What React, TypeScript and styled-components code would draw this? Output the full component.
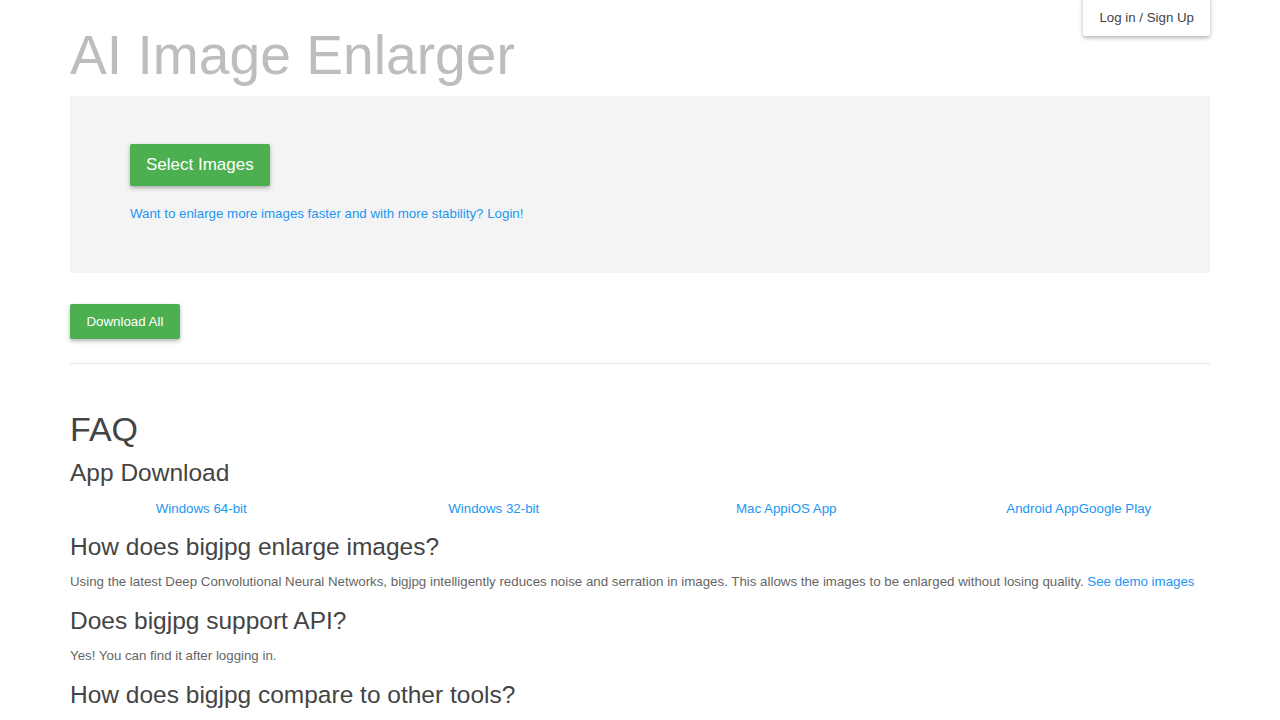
import React from "react";
import styled, { createGlobalStyle } from "styled-components";

const Global = createGlobalStyle`
  html, body { margin: 0; padding: 0; background: #fff; }
  body { font-family: "Liberation Sans", Arial, Helvetica, sans-serif; color: #444; }
  * { box-sizing: border-box; }
`;

const Page = styled.div`
  width: 1170px;
  margin: 0 auto;
  padding: 0 15px;
  position: relative;
`;

const LoginButton = styled.button`
  position: absolute;
  top: -4px;
  right: 15px;
  height: 40px;
  padding: 2px 16px 0;
  background: #fff;
  border: none;
  border-radius: 3px;
  box-shadow: 0 2px 4px rgba(0, 0, 0, 0.3);
  font-family: inherit;
  font-size: 13.3px;
  color: #444;
`;

const Title = styled.h1`
  margin: 0;
  padding-top: 22px;
  font-size: 55.2px;
  font-weight: 400;
  line-height: 66px;
  color: #bdbdbd;
`;

const Panel = styled.div`
  margin-top: 8px;
  background: #f4f4f4;
  padding: 48px 60px 56px;
  height: 177px;
`;

const GreenButton = styled.button<{ $big?: boolean }>`
  display: inline-block;
  border: none;
  border-radius: 2px;
  background: #4caf50;
  color: #fff;
  font-family: inherit;
  font-size: ${(p) => (p.$big ? "17px" : "13.3px")};
  height: ${(p) => (p.$big ? "42px" : "35px")};
  padding: ${(p) => (p.$big ? "0 16px" : "0 16.5px")};
  box-shadow: 0 2px 4px rgba(0, 0, 0, 0.3);
`;

const Link = styled.a`
  color: #2196f3;
  text-decoration: none;
  font-size: 13.3px;
`;

const LoginHint = styled.div`
  margin-top: 20px;
  line-height: 14px;
`;

const ActionRow = styled.div`
  padding-top: 31px;
  padding-bottom: 24px;
  border-bottom: 1px solid #e8e8e8;
`;

const FaqTitle = styled.h2`
  margin: 45px 0 0;
  font-size: 34px;
  font-weight: 400;
  line-height: 40px;
  color: #444;
`;

const Question = styled.h3<{ $first?: boolean }>`
  margin: ${(p) => (p.$first ? "10px 0 0" : "0")};
  font-size: 24.5px;
  font-weight: 400;
  line-height: 28px;
  color: #444;
`;

const DownloadRow = styled.div`
  display: grid;
  grid-template-columns: repeat(4, 1fr);
  margin: 14px -15px 0;
  line-height: 16px;
  text-align: center;
`;

const Answer = styled.p`
  margin: 12px 0 16px;
  font-size: 13.3px;
  line-height: 18px;
  color: #666;
`;

const Section = styled.div`
  margin-top: 16px;
`;

export default function App() {
  return (
    <>
      <Global />
      <Page>
        <LoginButton>Log in / Sign Up</LoginButton>
        <Title>AI Image Enlarger</Title>
        <Panel>
          <GreenButton $big>Select Images</GreenButton>
          <LoginHint>
            <Link href="#">Want to enlarge more images faster and with more stability? Login!</Link>
          </LoginHint>
        </Panel>
        <ActionRow>
          <GreenButton>Download All</GreenButton>
        </ActionRow>
        <FaqTitle>FAQ</FaqTitle>
        <Question $first>App Download</Question>
        <DownloadRow>
          <Link href="#">Windows 64-bit</Link>
          <Link href="#">Windows 32-bit</Link>
          <Link href="#">Mac AppiOS App</Link>
          <Link href="#">Android AppGoogle Play</Link>
        </DownloadRow>
        <Section>
          <Question>How does bigjpg enlarge images?</Question>
          <Answer>
            Using the latest Deep Convolutional Neural Networks, bigjpg intelligently reduces noise and serration in images. This allows the images to be enlarged without losing quality.{" "}
            <Link href="#">See demo images</Link>
          </Answer>
          <Question>Does bigjpg support API?</Question>
          <Answer>Yes! You can find it after logging in.</Answer>
          <Question>How does bigjpg compare to other tools?</Question>
        </Section>
      </Page>
    </>
  );
}
